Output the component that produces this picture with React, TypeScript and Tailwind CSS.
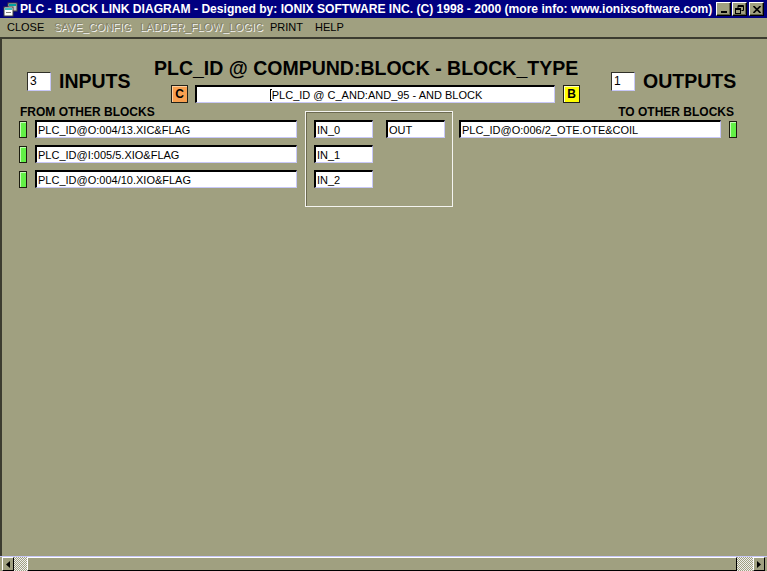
import * as React from "react";

// sunken white edit box, win9x style
function Field({ children, className = "" }: { children?: React.ReactNode; className?: string }) {
  return (
    <div
      className={
        "h-[18px] shrink-0 overflow-hidden whitespace-nowrap border-t-2 border-l-2 border-b border-r border-t-black border-l-black border-b-[#c8c8f8] border-r-[#c8c8f8] bg-white pl-px text-[11px] leading-[17px] text-black " +
        className
      }
    >
      {children}
    </div>
  );
}

function Led() {
  return <div className="h-[17px] w-[8px] shrink-0 border border-[#1c1c10] bg-[#62f046] shadow-[inset_1px_1px_0_#c4ffb4]" />;
}

function CountBox({ value }: { value: string }) {
  return (
    <div className="h-[19px] w-[24px] shrink-0 border-t border-l border-b border-r border-t-[#303028] border-l-[#303028] border-b-[#c8c8f8] border-r-[#c8c8f8] bg-white pl-[2px] text-[12px] leading-[17px] text-black">
      {value}
    </div>
  );
}

function CapBtn({ children }: { children: React.ReactNode }) {
  return (
    <div className="flex h-[14px] w-[15px] items-center justify-center border-t border-l border-b border-r border-t-white border-l-white border-b-black border-r-black bg-[#a0a080] shadow-[inset_-1px_-1px_0_#606048]">
      {children}
    </div>
  );
}

function ArrowBtn({ dir }: { dir: "left" | "right" }) {
  return (
    <div className="flex h-[14px] shrink-0 items-center justify-center border-t border-l border-b border-r border-t-white border-l-white border-b-black border-r-black bg-[#a0a080] px-[3px]">
      <svg width="4" height="7" viewBox="0 0 4 7">
        {dir === "left" ? <path d="M4 0 L0 3.5 L4 7 Z" fill="#000" /> : <path d="M0 0 L4 3.5 L0 7 Z" fill="#000" />}
      </svg>
    </div>
  );
}

const inputs = ["PLC_ID@O:004/13.XIC&FLAG", "PLC_ID@I:005/5.XIO&FLAG", "PLC_ID@O:004/10.XIO&FLAG"];

export default function App() {
  return (
    <div className="flex h-[571px] w-[767px] flex-col overflow-hidden bg-[#a0a080] font-['Liberation_Sans',Arial,sans-serif] text-black">
      {/* title bar */}
      <div className="flex h-[18px] shrink-0 items-center bg-[#000080] pl-[3px] pr-[3px]">
        <svg width="15" height="15" viewBox="0 0 15 15" className="shrink-0">
          <rect x="5" y="1" width="9" height="8" fill="#c0c0c0" stroke="#404040" />
          <rect x="6" y="2" width="7" height="2" fill="#00a0a0" />
          <rect x="1" y="5" width="9" height="9" fill="#ffffff" stroke="#404040" />
          <rect x="2" y="6" width="7" height="2" fill="#40c0c0" />
          <rect x="3" y="10" width="5" height="1" fill="#808080" />
        </svg>
        <div className="ml-[2px] flex-1 whitespace-nowrap text-[12.1px] font-bold leading-[18px] text-white">
          PLC - BLOCK LINK DIAGRAM - Designed by: IONIX SOFTWARE INC. (C) 1998 - 2000 (more info: www.ionixsoftware.com)
        </div>
        <div className="flex shrink-0 items-center">
          <CapBtn>
            <div className="mt-[6px] h-[2px] w-[6px] bg-black" />
          </CapBtn>
          <div className="ml-px">
            <CapBtn>
              <svg width="9" height="9" viewBox="0 0 9 9">
                <path d="M3 0.5 H8.5 V5.5 H6.5 M3 0.5 V3" fill="none" stroke="#000" />
                <path d="M3 1.5 H8" stroke="#000" />
                <rect x="0.5" y="3.5" width="5" height="5" fill="none" stroke="#000" />
                <path d="M1 4.5 H5" stroke="#000" />
              </svg>
            </CapBtn>
          </div>
          <div className="ml-[2px]">
            <CapBtn>
              <svg width="8" height="7" viewBox="0 0 8 7">
                <path d="M0.5 0 L7.5 7 M7.5 0 L0.5 7" stroke="#000" strokeWidth="1.6" />
              </svg>
            </CapBtn>
          </div>
        </div>
      </div>

      {/* menu */}
      <div className="flex h-[19px] shrink-0 items-center whitespace-nowrap pl-[7px] text-[11px] leading-[19px]">
        <div className="w-[47px]">CLOSE</div>
        <div className="w-[86px] text-[#85836a] [text-shadow:1px_1px_0_#f4f4f4]">SAVE_CONFIG</div>
        <div className="w-[130px] text-[#85836a] [text-shadow:1px_1px_0_#f4f4f4]">LADDER_FLOW_LOGIC</div>
        <div className="w-[45px]">PRINT</div>
        <div>HELP</div>
      </div>

      {/* client area */}
      <div className="flex min-h-0 flex-1 flex-col border-t-2 border-l-2 border-[#3c3c30] pt-[19px]">
        {/* header */}
        <div className="flex items-start">
          <div className="ml-[25px] mt-[13px] flex w-[127px] items-center gap-[8px]">
            <CountBox value="3" />
            <div className="text-[19.5px] font-bold leading-[20px]">INPUTS</div>
          </div>
          <div className="flex w-[457px] flex-col">
            <div className="whitespace-nowrap text-[19.5px] font-bold leading-[20px]">PLC_ID @ COMPUND:BLOCK - BLOCK_TYPE</div>
            <div className="ml-[17px] mt-[7px] flex items-center">
              <div className="flex h-[18px] w-[17px] items-center justify-center border border-[#202018] bg-[#f8a050] text-[12px] font-bold shadow-[inset_1px_1px_0_#ffd0a0]">
                C
              </div>
              <Field className="ml-[7px] w-[360px] text-center">
                <span className="inline-block h-[12px] w-[2px] border-l border-t border-b border-black align-[-2px]" />
                PLC_ID @ C_AND:AND_95 - AND BLOCK
              </Field>
              <div className="ml-[8px] flex h-[18px] w-[17px] items-center justify-center border border-[#202018] bg-[#ffff00] text-[12px] font-bold shadow-[inset_1px_1px_0_#ffffc0]">
                B
              </div>
            </div>
          </div>
          <div className="mt-[13px] flex items-center gap-[8px]">
            <CountBox value="1" />
            <div className="text-[19.5px] font-bold leading-[20px]">OUTPUTS</div>
          </div>
        </div>

        {/* blocks */}
        <div className="flex items-start">
          <div className="ml-[17px] flex w-[278px] flex-col">
            <div className="pl-px pt-[2px] text-[12px] font-bold leading-[14px]">FROM OTHER BLOCKS</div>
            <div className="mt-px flex flex-col gap-[7px]">
              {inputs.map((s) => (
                <div key={s} className="flex items-center gap-[8px]">
                  <Led />
                  <Field className="w-[262px]">{s}</Field>
                </div>
              ))}
            </div>
          </div>

          <div className="ml-[8px] mt-[8px] h-[96px] w-[148px] border border-[#f4f4f0] pl-[8px] pt-[8px] shadow-[inset_1px_1px_0_#6c6a50]">
            <div className="flex gap-[13px]">
              <div className="flex flex-col gap-[7px]">
                <Field className="w-[59px]">IN_0</Field>
                <Field className="w-[59px]">IN_1</Field>
                <Field className="w-[59px]">IN_2</Field>
              </div>
              <Field className="w-[59px]">OUT</Field>
            </div>
          </div>

          <div className="ml-[6px] flex w-[278px] flex-col">
            <div className="pr-[3px] pt-[2px] text-right text-[12px] font-bold leading-[14px]">TO OTHER BLOCKS</div>
            <div className="mt-px flex items-center gap-[8px]">
              <Field className="w-[262px]">PLC_ID@O:006/2_OTE.OTE&amp;COIL</Field>
              <Led />
            </div>
          </div>
        </div>
      </div>

      {/* horizontal scrollbar */}
      <div className="flex h-[15px] shrink-0 flex-col border-t border-[#c8c8f8]">
        <div className="flex h-[14px] pl-[2px] pr-[2px]">
          <ArrowBtn dir="left" />
          <div className="w-[13px] shrink-0 bg-[repeating-conic-gradient(#f0f0f0_0%_25%,#a0a080_0%_50%)] bg-[length:2px_2px]" />
          <div className="flex-1 border-t border-l border-b border-r border-t-white border-l-white border-b-black border-r-black bg-[#a0a080]" />
          <div className="w-[16px] shrink-0 bg-[repeating-conic-gradient(#f0f0f0_0%_25%,#a0a080_0%_50%)] bg-[length:2px_2px]" />
          <ArrowBtn dir="right" />
        </div>
      </div>
    </div>
  );
}
